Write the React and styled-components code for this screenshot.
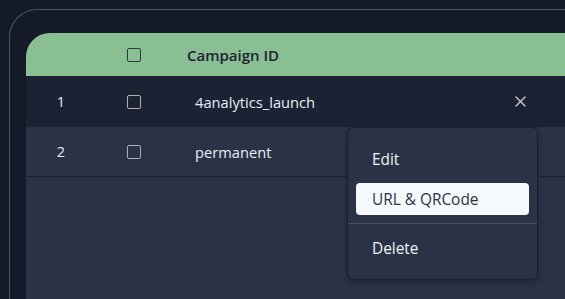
import React from "react";
import styled, { createGlobalStyle } from "styled-components";

const Global = createGlobalStyle`
  html, body { margin: 0; padding: 0; background: #151b28; overflow: hidden; }
  body { font-family: "Open Sans", "Noto Sans", sans-serif; }
  #root { height: 299px; }
`;

const Frame = styled.div`
  margin: 9px 0 0 9px;
  height: 290px;
  box-sizing: border-box;
  border-top: 1px solid #4a5465;
  border-left: 1px solid #4a5465;
  border-top-left-radius: 28px;
  padding: 23px 0 0 16px;
  background: #141a27;
`;

const Panel = styled.div`
  position: relative;
  height: 100%;
  background: #293345;
  border-top-left-radius: 24px;
`;

const Row = styled.div`
  display: grid;
  grid-template-columns: 70px 76px 1fr 50px 20px;
  align-items: center;
  height: ${(p) => p.$h}px;
  background: ${(p) => p.$bg};
  border-top-left-radius: ${(p) => (p.$head ? "24px" : "0")};
  border-bottom: ${(p) => (p.$line ? "1px solid #1a2131" : "none")};
  box-sizing: border-box;
`;

const Num = styled.div`
  text-align: center;
  font-size: 14.5px;
  color: #e3e9f0;
`;

const CheckCell = styled.div`
  display: flex;
  justify-content: center;
`;

const Box = styled.span`
  width: 14px;
  height: 14px;
  box-sizing: border-box;
  border: 1.5px solid ${(p) => (p.$dark ? "#2e3844" : "#aeb2b8")};
  border-radius: 2px;
`;

const HeadText = styled.div`
  padding-left: 15px;
  font-size: 15px;
  font-weight: 600;
  color: #1b2332;
`;

const CellText = styled.div`
  padding-left: 23px;
  font-size: 14.7px;
  color: #e6edf5;
`;

const IconCell = styled.div`
  display: flex;
  justify-content: center;
  color: #c9ced5;
`;

const Menu = styled.div`
  position: absolute;
  left: 321px;
  top: 94px;
  width: 191px;
  box-sizing: border-box;
  padding: 15px 8px;
  background: #293345;
  border: 1px solid #192030;
  border-radius: 6px;
  box-shadow: 0 3px 6px rgba(0, 0, 0, 0.25);
  display: flex;
  flex-direction: column;
  gap: 8px;
`;

const Item = styled.div`
  height: 32px;
  display: flex;
  align-items: center;
  padding-left: 16px;
  border-radius: 4px;
  font-size: 15.4px;
  color: ${(p) => (p.$active ? "#2b3547" : "#eef3f8")};
  background: ${(p) => (p.$active ? "#f5f9fd" : "transparent")};
`;

const Sep = styled.div`
  height: 1px;
  margin: 0 -8px;
  background: #465063;
`;

const Close = () => (
  <svg width="11" height="11" viewBox="0 0 11 11">
    <path d="M1 1 L10 10 M10 1 L1 10" stroke="currentColor" strokeWidth="1.4" strokeLinecap="round" />
  </svg>
);

export default function App() {
  return (
    <>
      <Global />
      <Frame>
        <Panel>
          <Row $h={43} $bg="#8abe93" $head>
            <div />
            <CheckCell><Box $dark /></CheckCell>
            <HeadText>Campaign ID</HeadText>
            <div />
            <div />
          </Row>
          <Row $h={51} $bg="#1a2233">
            <Num>1</Num>
            <CheckCell><Box /></CheckCell>
            <CellText>4analytics_launch</CellText>
            <IconCell><Close /></IconCell>
            <div />
          </Row>
          <Row $h={50} $bg="#293345" $line>
            <Num>2</Num>
            <CheckCell><Box /></CheckCell>
            <CellText>permanent</CellText>
            <div />
            <div />
          </Row>
          <Menu>
            <Item>Edit</Item>
            <Item $active>URL &amp; QRCode</Item>
            <Sep />
            <Item>Delete</Item>
          </Menu>
        </Panel>
      </Frame>
    </>
  );
}
